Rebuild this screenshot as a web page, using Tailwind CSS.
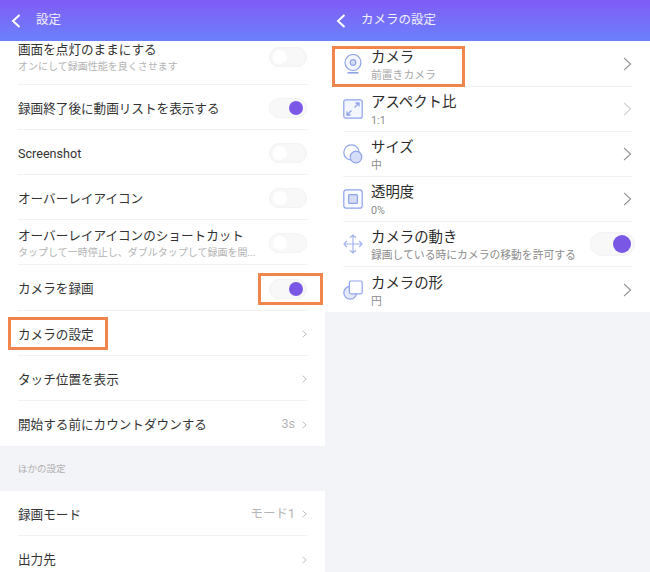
<!DOCTYPE html>
<html lang="ja"><head><meta charset="utf-8">
<script src="https://cdn.jsdelivr.net/npm/@tailwindcss/browser@4"></script>
</head>
<body class="m-0">
<div class="relative w-[650px] h-[572px] overflow-hidden flex bg-[#f3f4f8] font-['Roboto','Noto_Sans_CJK_JP',sans-serif] text-[#333]">

<!-- LEFT -->
<section class="w-[325px] h-full flex flex-col">
  <header class="h-[41px] shrink-0 flex items-center bg-gradient-to-b from-[#7f5bf6] to-[#6a80fc] text-white">
    <svg class="ml-[10px] w-[12px] h-[16px]" viewBox="0 0 12 16" fill="none" stroke="#fff" stroke-width="2"><path d="M9.5 2 L3 8 L9.5 14"/></svg>
    <span class="ml-[14px] text-[12.5px] text-white/90">設定</span>
  </header>
  <div class="bg-white px-[18px]">
    <div class="h-[44px] flex items-start justify-between border-b border-[#f1f1f1]">
      <div class="flex flex-col mt-px">
        <span class="text-[12.6px] leading-[16px]">画面を点灯のままにする</span>
        <span class="text-[10px] leading-[14px] mt-[2px] text-[#b4b4b4]">オンにして録画性能を良くさせます</span>
      </div>
      <div class="mt-[6px] w-[38px] h-[20px] rounded-full bg-[#f8f8f8] border border-[#f3f3f3] flex items-center justify-start pl-[3px]"><i class="block w-[14px] h-[14px] rounded-full bg-white"></i></div>
    </div>
    <div class="h-[45px] pt-[2px] flex items-center justify-between border-b border-[#f1f1f1]">
      <span class="mt-[2px] text-[12.6px]">録画終了後に動画リストを表示する</span>
      <div class="w-[38px] h-[20px] rounded-full bg-[#f8f8f8] border border-[#f3f3f3] flex items-center justify-end pr-[3px]"><i class="block w-[14px] h-[14px] rounded-full bg-[#7b57e6]"></i></div>
    </div>
    <div class="h-[45px] pt-[2px] flex items-center justify-between border-b border-[#f1f1f1]">
      <span class="mt-[2px] text-[12.6px]">Screenshot</span>
      <div class="w-[38px] h-[20px] rounded-full bg-[#f8f8f8] border border-[#f3f3f3] flex items-center justify-start pl-[3px]"><i class="block w-[14px] h-[14px] rounded-full bg-white"></i></div>
    </div>
    <div class="h-[45px] pt-[2px] flex items-center justify-between border-b border-[#f1f1f1]">
      <span class="mt-[2px] text-[12.6px]">オーバーレイアイコン</span>
      <div class="w-[38px] h-[20px] rounded-full bg-[#f8f8f8] border border-[#f3f3f3] flex items-center justify-start pl-[3px]"><i class="block w-[14px] h-[14px] rounded-full bg-white"></i></div>
    </div>
    <div class="h-[45px] pt-[2px] flex items-center justify-between border-b border-[#f1f1f1]">
      <div class="flex flex-col mt-[2px]">
        <span class="text-[12.6px] leading-[16px]">オーバーレイアイコンのショートカット</span>
        <span class="text-[10px] leading-[14px] mt-[2px] text-[#b4b4b4]">タップして一時停止し、ダブルタップして録画を開...</span>
      </div>
      <div class="w-[38px] h-[20px] rounded-full bg-[#f8f8f8] border border-[#f3f3f3] flex items-center justify-start pl-[3px]"><i class="block w-[14px] h-[14px] rounded-full bg-white"></i></div>
    </div>
    <div class="h-[46px] pt-[2px] flex items-center justify-between border-b border-[#f1f1f1]">
      <span class="mt-[2px] text-[12.6px]">カメラを録画</span>
      <div class="w-[38px] h-[20px] rounded-full bg-[#f8f8f8] border border-[#f3f3f3] flex items-center justify-end pr-[3px]"><i class="block w-[14px] h-[14px] rounded-full bg-[#7b57e6]"></i></div>
    </div>
    <div class="h-[45px] pt-[2px] flex items-center justify-between border-b border-[#f1f1f1]">
      <span class="mt-[2px] text-[12.6px]">カメラの設定</span>
      <svg class="w-[5px] h-[8px]" viewBox="0 0 5 8" fill="none" stroke="#bdbdbd"><path d="M.7.7 4.2 4 .7 7.3"/></svg>
    </div>
    <div class="h-[45px] pt-[2px] flex items-center justify-between border-b border-[#f1f1f1]">
      <span class="mt-[2px] text-[12.6px]">タッチ位置を表示</span>
      <svg class="w-[5px] h-[8px]" viewBox="0 0 5 8" fill="none" stroke="#bdbdbd"><path d="M.7.7 4.2 4 .7 7.3"/></svg>
    </div>
    <div class="h-[45px] pt-[2px] flex items-center justify-between">
      <span class="mt-[2px] text-[12.6px]">開始する前にカウントダウンする</span>
      <span class="flex items-center gap-[7px] text-[12.5px] text-[#b4b4b4]">3s<svg class="w-[5px] h-[8px]" viewBox="0 0 5 8" fill="none" stroke="#bdbdbd"><path d="M.7.7 4.2 4 .7 7.3"/></svg></span>
    </div>
  </div>
  <div class="h-[45px] pt-[2px] shrink-0 flex items-center px-[18px] text-[9.5px] text-[#b0b0b0]">ほかの設定</div>
  <div class="bg-white px-[18px] flex-1">
    <div class="h-[45px] pt-[2px] flex items-center justify-between border-b border-[#f1f1f1]">
      <span class="mt-[2px] text-[12.6px]">録画モード</span>
      <span class="flex items-center gap-[7px] text-[12.5px] text-[#b4b4b4]">モード1<svg class="w-[5px] h-[8px]" viewBox="0 0 5 8" fill="none" stroke="#bdbdbd"><path d="M.7.7 4.2 4 .7 7.3"/></svg></span>
    </div>
    <div class="h-[45px] pt-[2px] flex items-center justify-between">
      <span class="mt-[2px] text-[12.6px]">出力先</span>
      <svg class="w-[5px] h-[8px]" viewBox="0 0 5 8" fill="none" stroke="#bdbdbd"><path d="M.7.7 4.2 4 .7 7.3"/></svg>
    </div>
  </div>
</section>

<!-- RIGHT -->
<section class="w-[325px] h-full flex flex-col">
  <header class="h-[41px] shrink-0 flex items-center bg-gradient-to-b from-[#7f5bf6] to-[#6a80fc] text-white">
    <svg class="ml-[10px] w-[12px] h-[16px]" viewBox="0 0 12 16" fill="none" stroke="#fff" stroke-width="2"><path d="M9.5 2 L3 8 L9.5 14"/></svg>
    <span class="ml-[14px] text-[12.5px] text-white/90">カメラの設定</span>
  </header>
  <div class="bg-white px-[18px]">
    <div class="h-[46px] flex items-center border-b border-[#f1f1f1]">
      <svg class="w-[20px] h-[20px] shrink-0" viewBox="0 0 20 20" fill="none" stroke="#8fa3ea" stroke-width="1.2"><circle cx="10" cy="8.5" r="8" fill="#f4f6fe"/><circle cx="10" cy="8.5" r="2.8" fill="#d5dcf8"/><path d="M4.5 18.8h11" stroke-width="1.6"/></svg>
      <div class="ml-[8px] pt-[4px] flex flex-col flex-1">
        <span class="text-[14.4px] leading-[18px] text-[#2a2a2a]">カメラ</span>
        <span class="text-[10.8px] leading-[14px] mt-[2px] text-[#a8a8a8]">前置きカメラ</span>
      </div>
      <svg class="w-[9px] h-[14px]" viewBox="0 0 9 14" fill="none" stroke="#8e8e8e" stroke-width="1.1"><path d="M1 .8 7.6 7 1 13.2"/></svg>
    </div>
    <div class="h-[45px] flex items-center border-b border-[#f1f1f1]">
      <svg class="w-[20px] h-[20px] shrink-0" viewBox="0 0 20 20" fill="none" stroke="#8fa3ea" stroke-width="1.2"><rect x=".8" y=".8" width="18.4" height="18.4" rx="2" fill="#f4f6fe"/><path d="M11.5 8.5 16 4M12.5 4H16V7.5M8.5 11.5 4 16M7.5 16H4V12.5" stroke-width="1.3"/></svg>
      <div class="ml-[8px] pt-[4px] flex flex-col flex-1">
        <span class="text-[14.4px] leading-[18px] text-[#2a2a2a]">アスペクト比</span>
        <span class="text-[10.8px] leading-[14px] mt-[2px] text-[#8c8c8c]">1:1</span>
      </div>
      <svg class="w-[9px] h-[14px]" viewBox="0 0 9 14" fill="none" stroke="#cfcfcf" stroke-width="1.1"><path d="M1 .8 7.6 7 1 13.2"/></svg>
    </div>
    <div class="h-[45px] flex items-center border-b border-[#f1f1f1]">
      <svg class="w-[20px] h-[20px] shrink-0" viewBox="0 0 20 20" fill="none" stroke="#8fa3ea" stroke-width="1.2"><circle cx="8.5" cy="8.5" r="7.7"/><circle cx="13" cy="13" r="5.8" fill="#d5dcf8"/></svg>
      <div class="ml-[8px] pt-[4px] flex flex-col flex-1">
        <span class="text-[14.4px] leading-[18px] text-[#2a2a2a]">サイズ</span>
        <span class="text-[10.8px] leading-[14px] mt-[2px] text-[#8c8c8c]">中</span>
      </div>
      <svg class="w-[9px] h-[14px]" viewBox="0 0 9 14" fill="none" stroke="#8e8e8e" stroke-width="1.1"><path d="M1 .8 7.6 7 1 13.2"/></svg>
    </div>
    <div class="h-[45px] flex items-center border-b border-[#f1f1f1]">
      <svg class="w-[20px] h-[20px] shrink-0" viewBox="0 0 20 20" fill="none" stroke="#8fa3ea" stroke-width="1.2"><rect x=".8" y=".8" width="18.4" height="18.4" rx="2.5" fill="#f9faff"/><rect x="5.6" y="5.6" width="8.8" height="8.8" rx="1" fill="#d5dcf8"/></svg>
      <div class="ml-[8px] pt-[4px] flex flex-col flex-1">
        <span class="text-[14.4px] leading-[18px] text-[#2a2a2a]">透明度</span>
        <span class="text-[10.8px] leading-[14px] mt-[2px] text-[#8c8c8c]">0%</span>
      </div>
      <svg class="w-[9px] h-[14px]" viewBox="0 0 9 14" fill="none" stroke="#8e8e8e" stroke-width="1.1"><path d="M1 .8 7.6 7 1 13.2"/></svg>
    </div>
    <div class="h-[45px] flex items-center border-b border-[#f1f1f1]">
      <svg class="w-[20px] h-[20px] shrink-0" viewBox="0 0 20 20" fill="none" stroke="#a5b4ee" stroke-width="1.2"><path d="M10 1v18M1 10h18M7 3.8 10 1l3 2.8M7 16.2 10 19l3-2.8M3.8 7 1 10l2.8 3M16.2 7 19 10l-2.8 3"/></svg>
      <div class="ml-[8px] pt-[4px] flex flex-col flex-1">
        <span class="text-[14.4px] leading-[18px] text-[#2a2a2a]">カメラの動き</span>
        <span class="text-[10.8px] leading-[14px] mt-[2px] text-[#8c8c8c]">録画している時にカメラの移動を許可する</span>
      </div>
      <div class="-mr-[3px] w-[45px] h-[24px] rounded-full bg-[#f8f8f8] border border-[#f3f3f3] flex items-center justify-end pr-[3px]"><i class="block w-[18px] h-[18px] rounded-full bg-[#7b57e6]"></i></div>
    </div>
    <div class="h-[45px] flex items-center">
      <svg class="w-[20px] h-[20px] shrink-0" viewBox="0 0 20 20" fill="none" stroke="#8fa3ea" stroke-width="1.2"><circle cx="7.2" cy="12.8" r="6.4" fill="#e3e8fb"/><rect x="6.4" y="1" width="12.8" height="12.8" rx="1.5" fill="#fff"/></svg>
      <div class="ml-[8px] pt-[4px] flex flex-col flex-1">
        <span class="text-[14.4px] leading-[18px] text-[#2a2a2a]">カメラの形</span>
        <span class="text-[10.8px] leading-[14px] mt-[2px] text-[#8c8c8c]">円</span>
      </div>
      <svg class="w-[9px] h-[14px]" viewBox="0 0 9 14" fill="none" stroke="#8e8e8e" stroke-width="1.1"><path d="M1 .8 7.6 7 1 13.2"/></svg>
    </div>
  </div>
</section>

<!-- annotation highlights -->
<div class="absolute left-[258px] top-[273px] w-[65px] h-[32px] border-[3px] border-[#f0864b]"></div>
<div class="absolute left-[8px] top-[317px] w-[100px] h-[33px] border-[3px] border-[#f0864b]"></div>
<div class="absolute left-[332px] top-[46px] w-[133px] h-[41px] border-[3px] border-[#f0864b]"></div>
</div>
</body></html>
